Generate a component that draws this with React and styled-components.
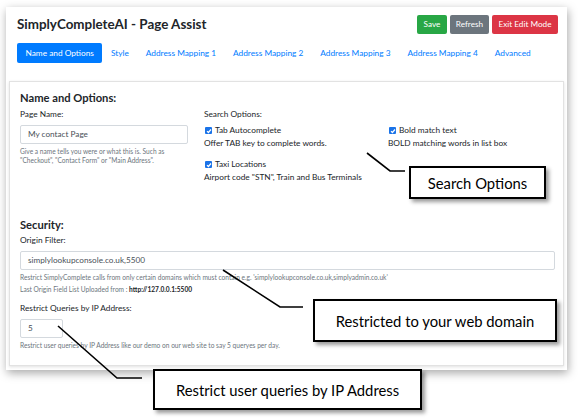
import React from "react";
import styled, { createGlobalStyle } from "styled-components";

const GlobalStyle = createGlobalStyle`
  body {
    margin: 0;
    background: #ffffff;
    font-family: Lato, "Noto Sans", sans-serif;
    color: #212529;
  }
`;

const Page = styled.div`
  position: relative;
  width: 578px;
  height: 418px;
  overflow: hidden;
  padding: 7px 0 0 6px;
  box-sizing: border-box;
`;

const Window = styled.div`
  width: 561px;
  height: 363px;
  background: #ffffff;
  box-shadow: 1px 3px 9px rgba(0, 0, 0, 0.35);
  box-sizing: border-box;
  padding: 8px 3px 0 3px;
`;

const Header = styled.div`
  display: flex;
  justify-content: space-between;
  align-items: center;
  padding: 0 6px 0 8px;
`;

const Title = styled.h1`
  margin: 0;
  font-size: 13.4px;
  font-weight: 700;
  line-height: 19px;
  color: #212529;
`;

const ButtonGroup = styled.div`
  display: flex;
  gap: 3px;
`;

const btnColors = {
  success: "#28a745",
  secondary: "#6c757d",
  danger: "#dc3545",
};

const Button = styled.button`
  width: ${(p) => p.$w}px;
  height: 19px;
  padding: 0;
  border: none;
  border-radius: 2px;
  background: ${(p) => btnColors[p.$variant]};
  color: #ffffff;
  font-family: inherit;
  font-size: 8.2px;
  line-height: 19px;
  text-align: center;
`;

const Tabs = styled.nav`
  display: flex;
  margin: 9px 0 0 8px;
`;

const Tab = styled.span`
  height: 20px;
  line-height: 20px;
  padding: 0 8.5px;
  border-radius: 2px;
  font-size: 8.3px;
  color: ${(p) => (p.$active ? "#ffffff" : "#007bff")};
  background: ${(p) => (p.$active ? "#007bff" : "transparent")};
  white-space: nowrap;
`;

const Card = styled.section`
  margin-top: 18px;
  height: 285px;
  box-sizing: border-box;
  border: 1px solid #e2e2e2;
  box-shadow: 0 1px 3px rgba(0, 0, 0, 0.12);
  padding: 8px 8px 0 10px;
`;

const SectionTitle = styled.h2`
  margin: 0;
  font-size: 11.2px;
  font-weight: 700;
  line-height: 16px;
  color: #212529;
`;

const Columns = styled.div`
  display: grid;
  grid-template-columns: 168px 168px 168px;
  column-gap: 16px;
  margin-top: 2px;
  height: 109px;
`;

const Field = styled.div`
  display: flex;
  flex-direction: column;
`;

const Label = styled.div`
  font-size: 8.3px;
  line-height: 13px;
  color: #212529;
  margin-top: ${(p) => p.$top || "0"};
`;

const Input = styled.div`
  box-sizing: border-box;
  width: ${(p) => p.$width || "100%"};
  height: 19px;
  margin-top: 3.5px;
  border: 1px solid #d4d9de;
  border-radius: 2px;
  padding: 0 7px;
  font-size: 8.2px;
  line-height: 17px;
  color: #495057;
`;

const Help = styled.div`
  font-size: 6.6px;
  line-height: 9px;
  color: #6c757d;
  margin-top: ${(p) => p.$top || "3.5px"};
  white-space: nowrap;
  b {
    color: #212529;
  }
`;

const CheckRow = styled.div`
  display: flex;
  align-items: center;
  gap: 3px;
  margin-top: ${(p) => p.$top || "0"};
  font-size: 8.3px;
  line-height: 13px;
  color: #212529;
`;

const Box = styled.span`
  display: inline-flex;
  align-items: center;
  justify-content: center;
  width: 7px;
  height: 7px;
  margin-left: 1px;
  border-radius: 1px;
  background: #1a73e8;
`;

const Desc = styled.div`
  font-size: 8.3px;
  line-height: 13px;
  color: #212529;
  white-space: nowrap;
  margin-top: ${(p) => p.$top || "0"};
`;

const Callout = styled.div`
  position: absolute;
  left: ${(p) => p.$x}px;
  top: ${(p) => p.$y}px;
  width: ${(p) => p.$w}px;
  height: ${(p) => p.$h}px;
  box-sizing: border-box;
  border: 2px solid #000000;
  background: #ffffff;
  box-shadow: 3px 3px 4px rgba(0, 0, 0, 0.4);
  display: flex;
  align-items: center;
  justify-content: center;
  font-family: Lato, "Open Sans", sans-serif;
  font-size: 14.8px;
  color: #000000;
`;

const Leaders = styled.svg`
  position: absolute;
  left: 0;
  top: 0;
  pointer-events: none;
`;

const Check = () => (
  <Box>
    <svg width="6" height="6" viewBox="0 0 6 6">
      <path d="M1 3.1 L2.4 4.5 L5 1.5" fill="none" stroke="#fff" strokeWidth="1.2" />
    </svg>
  </Box>
);

const tabs = [
  "Name and Options",
  "Style",
  "Address Mapping 1",
  "Address Mapping 2",
  "Address Mapping 3",
  "Address Mapping 4",
  "Advanced",
];

export default function App() {
  return (
    <Page>
      <GlobalStyle />
      <Window>
        <Header>
          <Title>SimplyCompleteAI - Page Assist</Title>
          <ButtonGroup>
            <Button $variant="success" $w={30}>Save</Button>
            <Button $variant="secondary" $w={39}>Refresh</Button>
            <Button $variant="danger" $w={66}>Exit Edit Mode</Button>
          </ButtonGroup>
        </Header>
        <Tabs>
          {tabs.map((t, i) => (
            <Tab key={t} $active={i === 0}>
              {t}
            </Tab>
          ))}
        </Tabs>
        <Card>
          <SectionTitle>Name and Options:</SectionTitle>
          <Columns>
            <Field>
              <Label>Page Name:</Label>
              <Input>My contact Page</Input>
              <Help>
                Give a name tells you were or what this is. Such as
                <br />
                "Checkout", "Contact Form" or "Main Address".
              </Help>
            </Field>
            <Field>
              <Label>Search Options:</Label>
              <CheckRow $top="3px">
                <Check />
                Tab Autocomplete
              </CheckRow>
              <Desc>Offer TAB key to complete words.</Desc>
              <CheckRow $top="8px">
                <Check />
                Taxi Locations
              </CheckRow>
              <Desc>Airport code "STN", Train and Bus Terminals</Desc>
            </Field>
            <Field>
              <CheckRow $top="16px">
                <Check />
                Bold match text
              </CheckRow>
              <Desc>BOLD matching words in list box</Desc>
            </Field>
          </Columns>
          <SectionTitle>Security:</SectionTitle>
          <Label $top="1px">Origin Filter:</Label>
          <Input>simplylookupconsole.co.uk,5500</Input>
          <Help>
            Restrict SimplyComplete calls from only certain domains which must
            contain e.g. 'simplylookupconsole.co.uk,simplyadmin.co.uk'
          </Help>
          <Help $top="3px">
            Last Origin Field List Uploaded from : <b>http://127.0.0.1:5500</b>
          </Help>
          <Label $top="8px">Restrict Queries by IP Address:</Label>
          <Input $width="43px">5</Input>
          <Help>
            Restrict user queries by IP Address like our demo on our web site to
            say 5 queryes per day.
          </Help>
        </Card>
      </Window>
      <Leaders width="578" height="418">
        <polyline points="367,153 390,171 405,171" fill="none" stroke="#000" strokeWidth="1.6" />
        <polyline points="223,270 280,307 303,307" fill="none" stroke="#000" strokeWidth="1.6" />
        <polyline points="58,326 117,378 142,378" fill="none" stroke="#000" strokeWidth="1.6" />
      </Leaders>
      <Callout $x={409} $y={166} $w={137} $h={33}>
        Search Options
      </Callout>
      <Callout $x={313} $y={299} $w={244} $h={43}>
        Restricted to your web domain
      </Callout>
      <Callout $x={153} $y={369} $w={269} $h={41}>
        Restrict user queries by IP Address
      </Callout>
    </Page>
  );
}
